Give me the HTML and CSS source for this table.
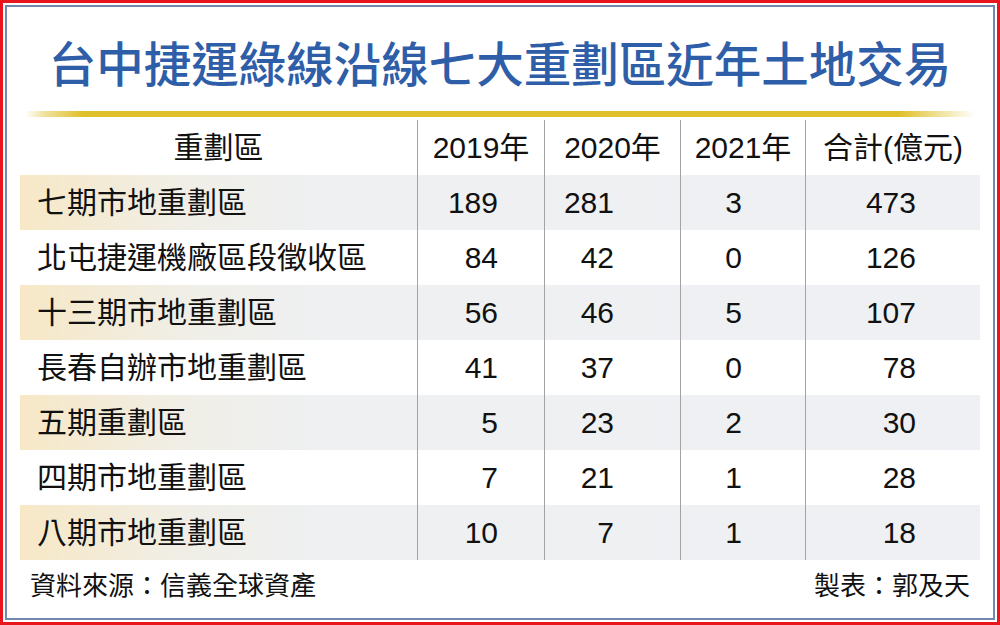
FILE: index.html
```html
<!DOCTYPE html>
<html lang="zh-Hant">
<head>
<meta charset="utf-8">
<title>台中捷運綠線沿線七大重劃區近年土地交易</title>
<link rel="stylesheet" href="styles.css">
</head>
<body>
<div class="frame">
  <div class="inner">
    <h1 class="title">台中捷運綠線沿線七大重劃區近年土地交易</h1>
    <div class="rule"></div>
    <div class="table">
      <div class="row head">
        <div class="cell name">重劃區</div>
        <div class="cell c2">2019年</div>
        <div class="cell c3">2020年</div>
        <div class="cell c4">2021年</div>
        <div class="cell c5">合計(億元)</div>
      </div>
      <div class="row shade">
        <div class="cell name">七期市地重劃區</div>
        <div class="cell c2">189</div>
        <div class="cell c3">281</div>
        <div class="cell c4">3</div>
        <div class="cell c5">473</div>
      </div>
      <div class="row">
        <div class="cell name">北屯捷運機廠區段徵收區</div>
        <div class="cell c2">84</div>
        <div class="cell c3">42</div>
        <div class="cell c4">0</div>
        <div class="cell c5">126</div>
      </div>
      <div class="row shade">
        <div class="cell name">十三期市地重劃區</div>
        <div class="cell c2">56</div>
        <div class="cell c3">46</div>
        <div class="cell c4">5</div>
        <div class="cell c5">107</div>
      </div>
      <div class="row">
        <div class="cell name">長春自辦市地重劃區</div>
        <div class="cell c2">41</div>
        <div class="cell c3">37</div>
        <div class="cell c4">0</div>
        <div class="cell c5">78</div>
      </div>
      <div class="row shade">
        <div class="cell name">五期重劃區</div>
        <div class="cell c2">5</div>
        <div class="cell c3">23</div>
        <div class="cell c4">2</div>
        <div class="cell c5">30</div>
      </div>
      <div class="row">
        <div class="cell name">四期市地重劃區</div>
        <div class="cell c2">7</div>
        <div class="cell c3">21</div>
        <div class="cell c4">1</div>
        <div class="cell c5">28</div>
      </div>
      <div class="row shade">
        <div class="cell name">八期市地重劃區</div>
        <div class="cell c2">10</div>
        <div class="cell c3">7</div>
        <div class="cell c4">1</div>
        <div class="cell c5">18</div>
      </div>
    </div>
    <div class="footer">
      <span class="source">資料來源：信義全球資產</span>
      <span class="credit">製表：郭及天</span>
    </div>
  </div>
</div>
</body>
</html>
```

FILE: styles.css
```css
html, body {
  margin: 0;
  padding: 0;
  background: #ffffff;
}

.frame {
  width: 1000px;
  height: 625px;
  box-sizing: border-box;
  border: 3px solid #e8141e;
  padding: 2px;
  background: #ffffff;
}

.inner {
  height: 100%;
  box-sizing: border-box;
  border: 2px solid #7186b0;
  padding: 0 13px;
  display: flex;
  flex-direction: column;
  font-family: "Liberation Sans", "Noto Sans CJK TC", sans-serif;
  color: #111111;
}

.title {
  margin: 27px 0 0 0;
  height: 77px;
  font-family: "Noto Sans CJK TC", sans-serif;
  font-weight: 500;
  font-size: 47.5px;
  line-height: 56px;
  text-align: center;
  color: #2f5ea9;
  letter-spacing: 0;
}

.rule {
  height: 6px;
  margin: 0 5px 0 5px;
  background: linear-gradient(to right,
    rgba(226, 194, 44, 0) 0,
    #f0e2a0 2%,
    #e0c02a 6%,
    #e0c02a 92%,
    rgba(226, 194, 44, 0) 100%);
}

.table {
  margin-top: 3px;
  display: flex;
  flex-direction: column;
}

.row {
  display: grid;
  grid-template-columns: 397px 127px 136px 125px 175px;
  height: 55px;
}

.row.shade {
  background: linear-gradient(to right, #f7e8c6 0, #f0eee6 160px, #eef0f2 300px, #eef0f3 100%);
}

.cell {
  display: flex;
  align-items: center;
  justify-content: flex-end;
  font-size: 30px;
  line-height: 1;
  box-sizing: border-box;
  border-left: 1px solid #a3a3a3;
}

.cell.name {
  border-left: none;
  justify-content: flex-start;
  padding-left: 17px;
}

.cell.c2 { padding-right: 46px; }
.cell.c3 { padding-right: 66px; }
.cell.c4 { padding-right: 63px; }
.cell.c5 { padding-right: 64px; }

.row.head .cell {
  justify-content: center;
  padding: 0;
}

.footer {
  flex: 1;
  display: flex;
  justify-content: space-between;
  align-items: center;
  padding: 0 10px 10px 10px;
  font-size: 26px;
  line-height: 1;
  font-family: "Noto Sans CJK TC", sans-serif;
  color: #111111;
}
```
